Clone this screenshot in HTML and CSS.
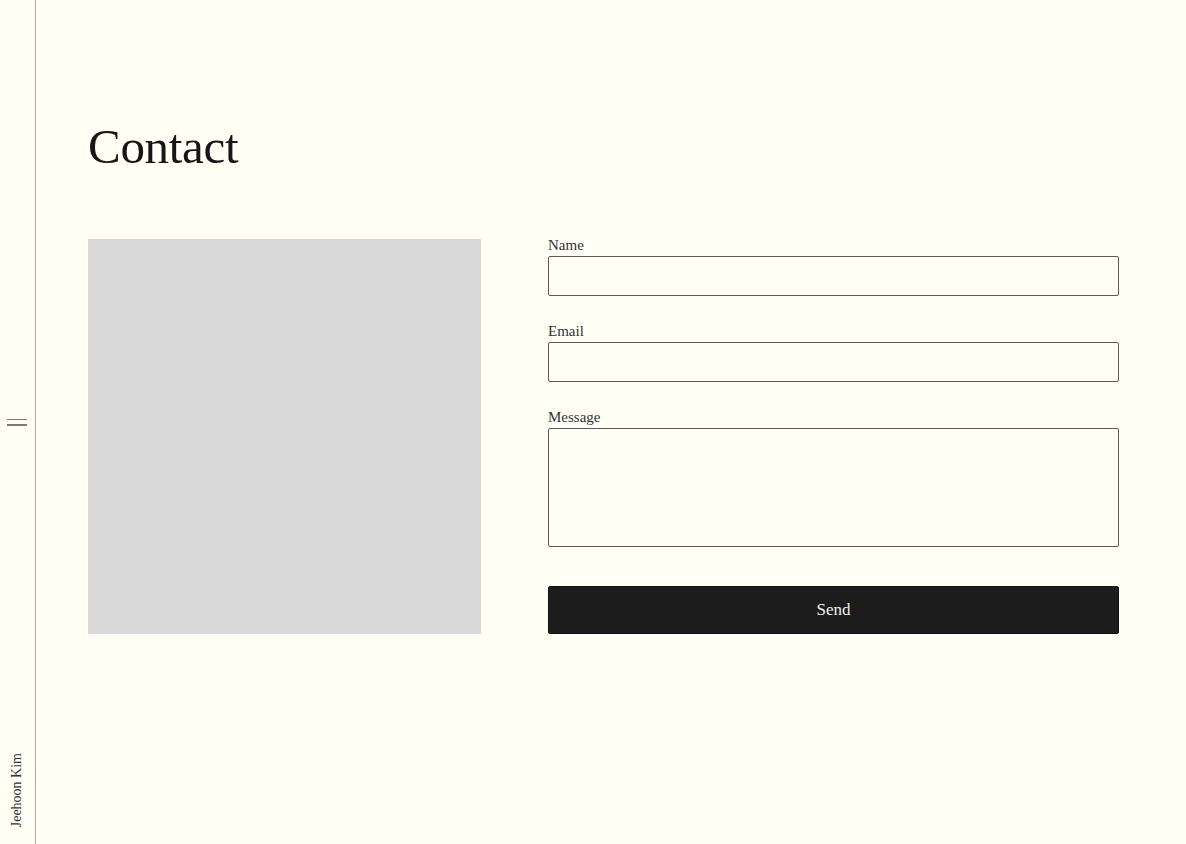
FILE: index.html
```html
<!DOCTYPE html>
<html lang="en">
<head>
<meta charset="utf-8">
<title>Contact</title>
<link rel="stylesheet" href="styles.css">
</head>
<body>
<div class="page">
  <aside class="sidebar">
    <div class="spacer"></div>
    <button class="menu" aria-label="Menu"><span></span><span></span></button>
    <div class="name-wrap"><span class="name">Jeehoon Kim</span></div>
  </aside>
  <main class="main">
    <h1 class="title">Contact</h1>
    <div class="content">
      <div class="photo"></div>
      <form class="form">
        <div class="field">
          <label class="label" for="name">Name</label>
          <input class="input" id="name" type="text">
        </div>
        <div class="field">
          <label class="label" for="email">Email</label>
          <input class="input" id="email" type="email">
        </div>
        <div class="field">
          <label class="label" for="message">Message</label>
          <textarea class="input textarea" id="message"></textarea>
        </div>
        <button class="send" type="button">Send</button>
      </form>
    </div>
  </main>
</div>
</body>
</html>
```

FILE: styles.css
```css
html, body {
  margin: 0;
  padding: 0;
  background: #fffff6;
  font-family: "Liberation Serif", "Times New Roman", serif;
  color: #1a1a1a;
}
.page {
  display: flex;
  height: 844px;
}
.sidebar {
  width: 35px;
  border-right: 1px solid #a8a8a0;
  display: grid;
  grid-template-rows: 1fr auto 1fr;
  justify-items: center;
}
.menu {
  background: none;
  border: 0;
  padding: 0;
  width: 20px;
  display: flex;
  flex-direction: column;
  gap: 4px;
  margin-left: -2px;
}
.menu span {
  display: block;
  height: 1.5px;
  background: #7a7a75;
}
.name-wrap {
  align-self: end;
  padding-bottom: 17px;
}
.name {
  display: block;
  writing-mode: vertical-rl;
  transform: rotate(180deg);
  font-size: 14px;
  color: #333;
  margin-left: -2px;
}
.main {
  flex: 1;
  padding-left: 52px;
  padding-right: 67px;
}
.title {
  margin: 122px 0 0;
  font-size: 49px;
  line-height: 49px;
  font-weight: normal;
  color: #161616;
  letter-spacing: -0.3px;
}
.content {
  margin-top: 67px;
  display: flex;
  gap: 67px;
  align-items: flex-start;
}
.photo {
  width: 393px;
  height: 395px;
  background: #d9d9d9;
  margin-top: 1px;
}
.form {
  flex: 1;
  display: flex;
  flex-direction: column;
}
.field {
  display: flex;
  flex-direction: column;
  margin-bottom: 28px;
}
.label {
  font-size: 15px;
  line-height: 14px;
  padding-bottom: 4px;
  color: #333;
}
.input {
  box-sizing: border-box;
  height: 40px;
  border: 1px solid #5a5a5a;
  border-radius: 2px;
  background: transparent;
  font-family: inherit;
  font-size: 15px;
  margin: 0;
}
.textarea {
  height: 119px;
  resize: none;
}
.field:last-of-type {
  margin-bottom: 39px;
}
.send {
  height: 48px;
  background: #1c1c1c;
  color: #f2f2ea;
  border: 1px solid #111;
  border-radius: 2px;
  font-family: inherit;
  font-size: 17px;
  padding: 0;
}
```
